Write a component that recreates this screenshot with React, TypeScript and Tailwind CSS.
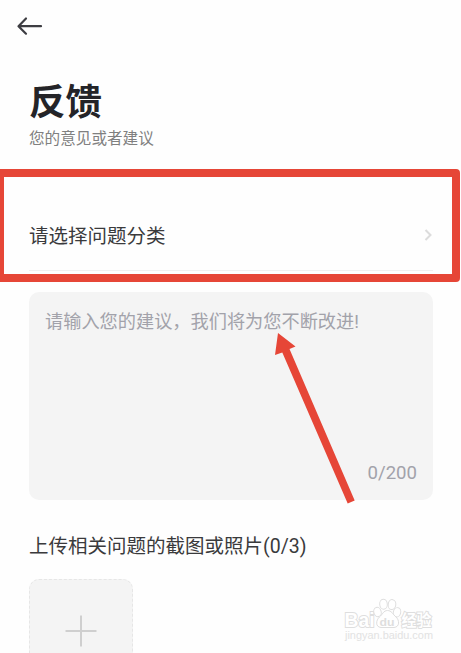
function BackIcon() {
  return (
    <svg className="ml-4 h-[22px] w-[28px]" viewBox="0 0 28 22" fill="none" stroke="#3d3d42" strokeWidth="2.200" strokeLinecap="round" strokeLinejoin="round">
      <path d="M10 3.500 2.500 11.200l7.500 7.500M3 11.200h22" />
    </svg>
  )
}

function Highlight() {
  return (
    <>
      <div className="pointer-events-none absolute -left-1 top-[169px] h-[113px] w-[464px] rounded-[4px] border-8 border-[#e64637]" />
      <svg className="pointer-events-none absolute left-[270px] top-[328px] h-[180px] w-[90px]" viewBox="270 328 90 180" fill="#e64637">
        <path d="M278 333 295.500 346.500 289.500 349 354.700 500.500 347.700 503.500 282.300 352.500 275 355Z" />
      </svg>
    </>
  )
}

function Watermark() {
  return (
    <svg className="pointer-events-none absolute left-[340px] top-[595px] h-[50px] w-[100px]" viewBox="340 595 100 50" fill="#fff" stroke="#dedede" strokeWidth="1">
      <g fontFamily="'Liberation Sans', 'Noto Sans CJK SC', sans-serif" fontWeight="700" strokeWidth="2" paintOrder="stroke">
        <text x="344.500" y="627" fontSize="21" textLength="30" lengthAdjust="spacingAndGlyphs">Bai</text>
        <text x="401.500" y="626" fontSize="16" textLength="30" lengthAdjust="spacingAndGlyphs">经验</text>
      </g>
      <ellipse cx="377.500" cy="612" rx="3.700" ry="4.700" transform="rotate(-15 377.500 612)" />
      <ellipse cx="383.500" cy="604.200" rx="3.800" ry="5" transform="rotate(-5 383.500 604.200)" />
      <ellipse cx="392" cy="604.600" rx="3.800" ry="5" transform="rotate(8 392 604.600)" />
      <ellipse cx="397" cy="612.300" rx="3.700" ry="4.700" transform="rotate(15 397 612.300)" />
      <path d="M387.500 610.500c-4 0-5 4-8 6.500-3.500 3-4.500 10 1.500 10.500h13c6-.5 5.500-7.500 2-10.500-3-2.500-4.500-6.500-8.500-6.500Z" />
      <text x="379.500" y="625.500" fontSize="11.500" fontWeight="700" fill="#dedede" stroke="none" fontFamily="'Liberation Sans', sans-serif" textLength="15" lengthAdjust="spacingAndGlyphs">du</text>
      <text x="345" y="639" fontSize="10.500" fill="#e2e2e2" stroke="none" fontFamily="'Liberation Sans', sans-serif" textLength="88" lengthAdjust="spacingAndGlyphs">jingyan.baidu.com</text>
    </svg>
  )
}

export default function App() {
  return (
    <div className="relative h-[653px] w-[461px] overflow-hidden bg-[#fefefe] font-[Roboto,'Noto_Sans_CJK_SC',sans-serif] text-[#3a3a3c]">
      <header className="flex h-[52px] items-center">
        <BackIcon />
      </header>

      <main className="px-[29px] pr-[28px]">
        <h1 className="mt-[29px] text-[36.500px] font-bold leading-[44px] text-[#242428]">反馈</h1>
        <p className="mt-[3px] text-[15.600px] leading-[22px] text-[#808080]">您的意见或者建议</p>

        <div className="mt-[51px] flex h-[70px] items-center justify-between border-b border-[#f0f0f0] text-[19.500px]">
          <span className="pt-0.5">请选择问题分类</span>
          <svg className="-mt-0.5 h-[14px] w-[9px]" viewBox="0 0 9 14" fill="none" stroke="#dcdcdc" strokeWidth="2">
            <path d="M1.500 2 6.500 7l-5 5" />
          </svg>
        </div>

        <div className="mt-[21px] flex h-[208px] flex-col justify-between rounded-[10px] bg-[#f4f4f4] px-4 pb-[14px] pt-[17px] text-[#a2a2aa]">
          <p className="whitespace-nowrap text-[18.200px] leading-[26px]">请输入您的建议，我们将为您不断改进!</p>
          <span className="self-end text-[18.600px] leading-[26px]">0/200</span>
        </div>

        <h2 className="mt-[33px] whitespace-nowrap text-[19.500px] leading-7">上传相关问题的截图或照片(0/3)</h2>
        <div className="mt-[18px] flex h-[104px] w-[104px] items-center justify-center rounded-[10px] border border-dashed border-[#e6e6e6] bg-[#f4f4f4]">
          <svg className="h-[32px] w-[32px]" viewBox="0 0 32 32" stroke="#cfcfcf" strokeWidth="2">
            <path d="M16 .5v31M.5 16h31" />
          </svg>
        </div>
      </main>

      <Highlight />
      <Watermark />
    </div>
  )
}
